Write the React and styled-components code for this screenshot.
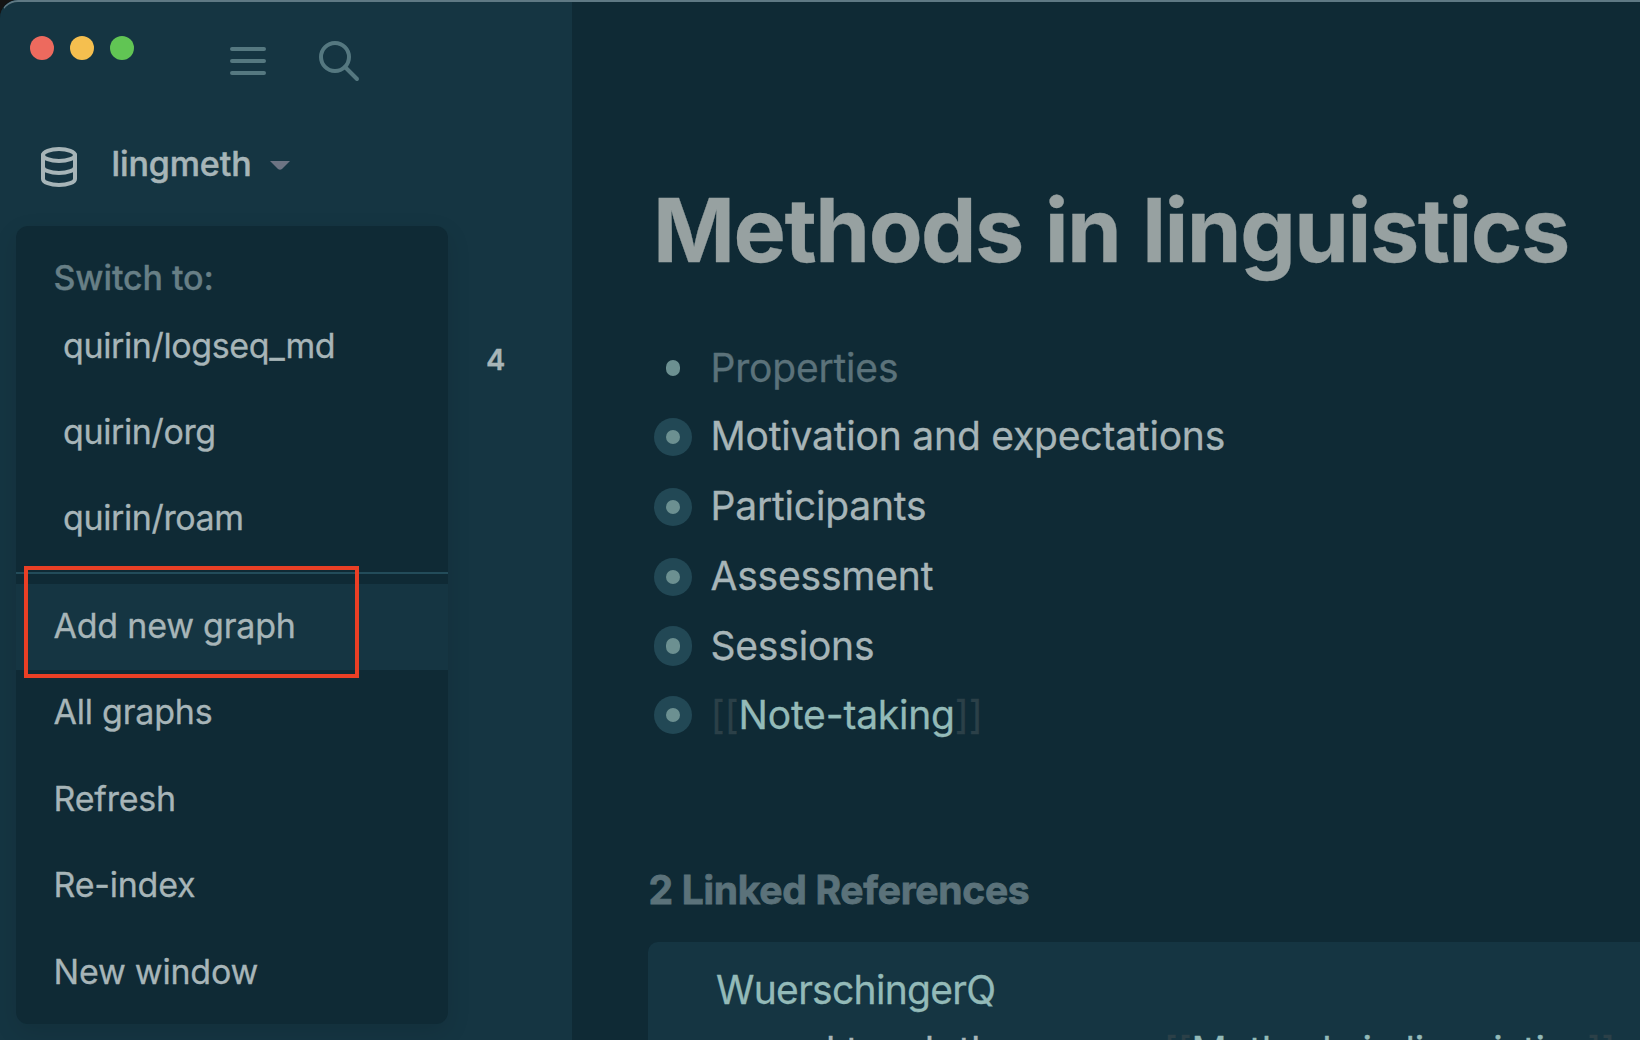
import React from "react";
import styled, { createGlobalStyle } from "styled-components";

const Global = createGlobalStyle`
  *, *::before, *::after { box-sizing: border-box; }
  html, body { margin: 0; padding: 0; background: #141414; overflow: hidden; }
  body { font-family: Inter, "Liberation Sans", sans-serif; -webkit-font-smoothing: antialiased; }
`;

const Window = styled.div`
  position: relative;
  display: flex;
  width: 1640px;
  height: 1040px;
  overflow: hidden;
  background: #0f2a35;
  border-top-left-radius: 18px;
  color: #a7b5b8;
  font-weight: 400;
  -webkit-text-stroke: 0.3px currentColor;
  &::before {
    content: "";
    position: absolute;
    inset: 0 -20px -20px 0;
    border-top: 2px solid #5f7984;
    border-left: 1px solid transparent;
    border-top-left-radius: 18px;
    pointer-events: none;
  }
`;

const Sidebar = styled.aside`
  flex: none;
  width: 572px;
  height: 1040px;
  background: #153542;
`;

const TitleBar = styled.header`
  display: flex;
  height: 85px;
  padding: 36px 0 0 30px;
`;

const Lights = styled.div`
  display: flex;
  gap: 16px;
  width: 194px;
`;

const Light = styled.span`
  width: 24px;
  height: 24px;
  border-radius: 50%;
  background: ${(p) => p.$color};
`;

const Tools = styled.div`
  display: flex;
  gap: 43px;
  padding-top: 1px;
  color: #557880;
`;

const Svg = styled.svg`
  display: block;
  flex: none;
  width: 48px;
  height: 48px;
  fill: none;
  stroke: currentColor;
  stroke-width: 2;
  stroke-linecap: round;
  stroke-linejoin: round;
`;

const GraphSwitcher = styled.div`
  display: flex;
  align-items: center;
  height: 60px;
  margin-top: 52px;
  padding-left: 35px;
`;

const GraphName = styled.span`
  margin: -6px 0 0 28.5px;
  font-size: 34px;
  font-weight: 500;
  line-height: 40px;
  letter-spacing: -0.1px;
  -webkit-text-stroke-width: 0.5px;
`;

const Caret = styled.svg`
  width: 20px;
  height: 9px;
  margin: -3px 0 0 18px;
  fill: #6d7483;
`;

const SidebarBody = styled.div`
  display: flex;
  padding: 29px 0 0 16px;
`;

const Menu = styled.div`
  width: 432px;
  height: 798px;
  padding-top: 32px;
  border-radius: 12px;
  background: #0f2a35;
  box-shadow: 0 8px 24px rgba(0, 0, 0, 0.1);
`;

const MenuTitle = styled.div`
  height: 46px;
  padding-left: 37.5px;
  font-size: 34px;
  font-weight: 500;
  line-height: 40px;
  letter-spacing: -0.1px;
  color: #677f86;
`;

const MenuItem = styled.div`
  height: ${(p) => (p.$nested ? 86 : 86.4)}px;
  padding-left: ${(p) => (p.$nested ? 47 : 37.5)}px;
  font-size: 34px;
  line-height: 84px;
  letter-spacing: ${(p) => (p.$nested ? -0.38 : -0.22)}px;
  background: ${(p) => (p.$active ? "#153542" : "transparent")};
`;

const Divider = styled.div`
  height: 2px;
  margin: 10px 0;
  background: #234c5a;
`;

const Highlight = styled.div`
  position: absolute;
  left: 24px;
  top: 566px;
  width: 335px;
  height: 112px;
  border: 4px solid #ea3f25;
`;

const Count = styled.div`
  margin: 114px 0 0 38px;
  font-size: 29px;
  font-weight: 600;
  line-height: 40px;
`;

const Main = styled.main`
  flex: 1;
  min-width: 0;
  padding: 177px 0 0 76px;
`;

const Title = styled.h1`
  margin: 0;
  padding-left: 5px;
  font-size: 88px;
  font-weight: 700;
  line-height: 106px;
  letter-spacing: -1.5px;
  word-spacing: 2.5px;
  color: #97a1a1;
  white-space: nowrap;
`;

const Blocks = styled.ul`
  margin: 50.5px 0 0;
  padding: 0 0 0 6px;
  list-style: none;
`;

const Block = styled.li`
  display: flex;
  align-items: center;
  height: ${(p) => p.$height}px;
`;

const Bullet = styled.span`
  display: flex;
  align-items: center;
  justify-content: center;
  flex: none;
  width: 38px;
  height: ${(p) => (p.$tall ? 40 : 38)}px;
  border-radius: 19px;
  background: ${(p) => (p.$plain ? "transparent" : "#224855")};
  &::after {
    content: "";
    width: 14px;
    height: ${(p) => (p.$tall ? 16 : 14)}px;
    border-radius: 7px;
    background: #6c9091;
  }
`;

const BlockText = styled.span`
  margin: ${(p) => (p.$lift ? -2 : 0)}px 0 0 18.5px;
  font-size: 39px;
  line-height: 60px;
  letter-spacing: -0.2px;
  white-space: nowrap;
  color: ${(p) => (p.$muted ? "#5b727a" : "inherit")};
`;

const Bracket = styled.span`
  color: #2b4048;
`;

const PageRef = styled.span`
  color: #93bab8;
`;

const RefsTitle = styled.h2`
  margin: 116.5px 0 0;
  padding-left: 0.5px;
  font-size: 39px;
  font-weight: 700;
  line-height: 48px;
  letter-spacing: -0.28px;
  color: #5b727a;
  -webkit-text-stroke-width: 0.8px;
`;

const RefCard = styled.section`
  height: 200px;
  margin: 28px -20px 0 0;
  padding: 20px 0 0 68px;
  border-radius: 10px;
  background: #153542;
  font-size: 39px;
  line-height: 56px;
  white-space: nowrap;
`;

const RefPage = styled.div`
  letter-spacing: -0.7px;
  color: #93bab8;
`;

const RefRow = styled.div`
  margin-top: 5px;
  padding-left: 51px;
  letter-spacing: -0.2px;
`;

export default function App() {
  return (
    <>
      <Global />
      <Window>
        <Sidebar>
          <TitleBar>
            <Lights>
              <Light $color="#ed6a5e" />
              <Light $color="#f5bf4f" />
              <Light $color="#61c554" />
            </Lights>
            <Tools>
              <Svg viewBox="0 0 24 24"><path d="M4 6h16M4 12h16M4 18h16" /></Svg>
              <Svg viewBox="0 0 24 24"><circle cx="10" cy="10" r="7" /><path d="M21 21l-6-6" /></Svg>
            </Tools>
          </TitleBar>
          <GraphSwitcher>
            <Svg viewBox="0 0 24 24">
              <ellipse cx="12" cy="6" rx="8" ry="3" />
              <path d="M4 6v6a8 3 0 0 0 16 0V6" />
              <path d="M4 12v6a8 3 0 0 0 16 0v-6" />
            </Svg>
            <GraphName>lingmeth</GraphName>
            <Caret viewBox="0 0 20 9"><path d="M0 0H20L12 8Q10 9.6 8 8Z" /></Caret>
          </GraphSwitcher>
          <SidebarBody>
            <Menu>
              <MenuTitle>Switch to:</MenuTitle>
              <MenuItem $nested>quirin/logseq_md</MenuItem>
              <MenuItem $nested>quirin/org</MenuItem>
              <MenuItem $nested>quirin/roam</MenuItem>
              <Divider />
              <MenuItem $active>Add new graph</MenuItem>
              <MenuItem>All graphs</MenuItem>
              <MenuItem>Refresh</MenuItem>
              <MenuItem>Re-index</MenuItem>
              <MenuItem>New window</MenuItem>
            </Menu>
            <Count>4</Count>
          </SidebarBody>
        </Sidebar>
        <Main>
          <Title>Methods in linguistics</Title>
          <Blocks>
            <Block $height={69}><Bullet $plain $tall /><BlockText $muted>Properties</BlockText></Block>
            <Block $height={69}><Bullet /><BlockText $lift>Motivation and expectations</BlockText></Block>
            <Block $height={70}><Bullet /><BlockText $lift>Participants</BlockText></Block>
            <Block $height={70}><Bullet /><BlockText $lift>Assessment</BlockText></Block>
            <Block $height={69}><Bullet $tall /><BlockText>Sessions</BlockText></Block>
            <Block $height={69}>
              <Bullet />
              <BlockText><Bracket>[[</Bracket><PageRef>Note-taking</PageRef><Bracket>]]</Bracket></BlockText>
            </Block>
          </Blocks>
          <RefsTitle>2 Linked References</RefsTitle>
          <RefCard>
            <RefPage>WuerschingerQ</RefPage>
            <RefRow>
              and teach the course <Bracket>[[</Bracket><PageRef>Methods in linguistics</PageRef><Bracket>]]</Bracket>
            </RefRow>
          </RefCard>
        </Main>
        <Highlight />
      </Window>
    </>
  );
}
